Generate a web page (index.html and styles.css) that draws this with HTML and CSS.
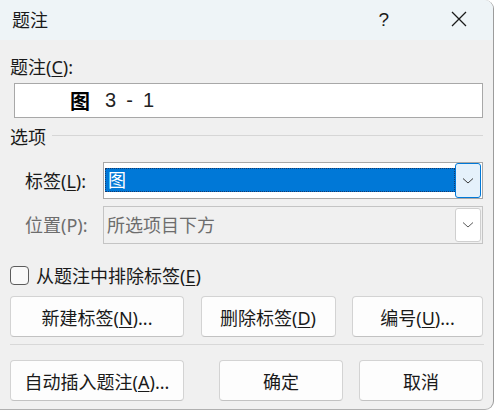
FILE: index.html
```html
<!DOCTYPE html>
<html lang="zh-CN">
<head>
<meta charset="utf-8">
<title>题注</title>
<link rel="stylesheet" href="styles.css">
</head>
<body>
<div class="dialog">
  <div class="titlebar">
    <span class="title">题注</span>
    <span class="help">?</span>
    <span class="close">
      <svg width="16" height="16" viewBox="0 0 16 16"><path d="M1 1 L15 15 M15 1 L1 15" stroke="#1a1a1a" stroke-width="1.3" fill="none"/></svg>
    </span>
  </div>
  <div class="body">
    <div class="label">题注(<u>C</u>):</div>
    <div class="caption-input"><span class="cap-word">图</span><span class="cap-num">3 - 1</span></div>
    <div class="group-head"><span>选项</span><span class="rule"></span></div>
    <div class="field-grid">
      <span class="field-label">标签(<u>L</u>):</span>
      <div class="combo focused">
        <div class="combo-value"><span class="sel">图</span></div>
        <div class="combo-btn"><svg width="12" height="8" viewBox="0 0 12 8"><path d="M1 1.5 L6 6 L11 1.5" stroke="#3a3a3a" stroke-width="1" fill="none"/></svg></div>
      </div>
      <span class="field-label disabled">位置(P):</span>
      <div class="combo disabled">
        <div class="combo-value">所选项目下方</div>
        <div class="combo-btn"><svg width="12" height="8" viewBox="0 0 12 8"><path d="M1 1.5 L6 6 L11 1.5" stroke="#5a5a5a" stroke-width="1" fill="none"/></svg></div>
      </div>
    </div>
    <div class="check-row"><span class="checkbox"></span><span>从题注中排除标签(<u>E</u>)</span></div>
    <div class="btn-row row1">
      <button class="btn w174">新建标签(<u>N</u>)...</button>
      <button class="btn w135">删除标签(<u>D</u>)</button>
      <button class="btn w131">编号(<u>U</u>)...</button>
    </div>
    <div class="sep"></div>
    <div class="btn-row row2">
      <button class="btn w174 push">自动插入题注(<u>A</u>)...</button>
      <button class="btn w124">确定</button>
      <button class="btn w124">取消</button>
    </div>
  </div>
</div>
</body>
</html>
```
FILE: styles.css
```css
html, body {
  margin: 0;
  padding: 0;
  background: #ffffff;
}
body {
  font-family: "Noto Sans", "Noto Sans CJK SC", sans-serif;
  font-size: 18px;
  color: #1a1a1a;
}
.dialog {
  width: 493px;
  height: 409px;
  background: #f0f0f0;
  border-right: 1px solid #9c9c9c;
  border-bottom: 1px solid #b0b0b0;
  border-radius: 0 9px 9px 0;
  overflow: hidden;
  display: flex;
  flex-direction: column;
}
.titlebar {
  height: 40px;
  background: #eef4f7;
  display: flex;
  align-items: center;
  flex: none;
}
.title {
  margin-left: 12px;
  font-size: 18px;
  line-height: 22px;
  flex: 1;
}
.help {
  font-family: "Liberation Sans", sans-serif;
  font-size: 19px;
  line-height: 22px;
  margin-right: 62px;
  color: #1a1a1a;
}
.close {
  display: flex;
  margin-right: 26px;
  margin-top: -2px;
}
.body {
  padding: 0 10px 0 10px;
  display: flex;
  flex-direction: column;
}
.label {
  margin-top: 16px;
  line-height: 22px;
}
u {
  text-decoration-thickness: 1px;
  text-underline-offset: 2px;
}
.caption-input {
  margin: 5px 0 0 4px;
  height: 35px;
  box-sizing: border-box;
  background: #fff;
  border: 1px solid #a8a8a8;
  display: flex;
  align-items: center;
  padding-left: 55px;
  color: #000;
}
.cap-word {
  font-family: "Noto Sans CJK SC", sans-serif;
  font-size: 20px;
  font-weight: 600;
  line-height: 24px;
}
.cap-num {
  font-family: "Liberation Sans", sans-serif;
  font-size: 20px;
  word-spacing: 4.5px;
  margin-left: 15px;
  color: #222;
}
.group-head {
  margin-top: 8px;
  display: flex;
  align-items: center;
  line-height: 22px;
}
.rule {
  flex: 1;
  height: 1px;
  background: #d6d6d6;
  margin-left: 6px;
  margin-top: -4px;
}
.field-grid {
  margin-top: 14px;
  display: grid;
  grid-template-columns: 78px 1fr;
  grid-template-rows: 37px 38px;
  row-gap: 7px;
  padding-left: 15px;
  align-items: center;
  line-height: 22px;
}
.field-label.disabled {
  color: #6d6d6d;
}
.combo {
  height: 100%;
  box-sizing: border-box;
  border: 1px solid #a8a8a8;
  background: #fff;
  display: flex;
  align-items: stretch;
}
.combo.disabled {
  background: #f0f0f0;
  border-color: #c4c4c4;
}
.combo-value {
  flex: 1;
  display: flex;
  align-items: center;
}
.focused .combo-value {
  padding: 5px 0 6px 1px;
}
.sel {
  flex: 1;
  align-self: stretch;
  background: #0078d7;
  color: #fff;
  outline: 1px dotted #1a3a6a;
  outline-offset: -1px;
  padding-left: 3px;
  display: flex;
  align-items: center;
}
.disabled .combo-value {
  padding-left: 3px;
  color: #6d6d6d;
}
.combo-btn {
  width: 26px;
  box-sizing: border-box;
  margin-right: 1px;
  display: flex;
  align-items: center;
  justify-content: center;
  border-radius: 3px;
}
.focused .combo-btn {
  background: #e5f1fb;
  border: 1px solid #0078d7;
}
.disabled .combo-btn {
  background: #fff;
  border: 1px solid #cfcfcf;
  margin: 1px 1px 1px 0;
}
.check-row {
  margin-top: 22px;
  display: flex;
  align-items: center;
  height: 19px;
  line-height: 22px;
}
.checkbox {
  width: 19px;
  height: 19px;
  box-sizing: border-box;
  border: 1px solid #5c5c5c;
  border-radius: 4px;
  background: #f9f9f9;
  margin-right: 7px;
}
.btn-row {
  display: flex;
  gap: 16px;
}
.row1 {
  margin-top: 11px;
  justify-content: space-between;
  width: 473px;
}
.row2 {
  margin-top: 15px;
  width: 473px;
}
.push {
  margin-right: auto;
}
.btn {
  font: inherit;
  color: #1a1a1a;
  height: 41px;
  background: #fdfdfd;
  border: 1px solid #d3d3d3;
  border-bottom-color: #c2c2c2;
  border-radius: 4px;
  padding: 0;
}
.w174 { width: 174px; }
.w135 { width: 135px; }
.w131 { width: 131px; }
.w124 { width: 124px; }
.sep {
  margin-top: 7px;
  height: 1px;
  background: #d8d8d8;
  width: 474px;
}
```
